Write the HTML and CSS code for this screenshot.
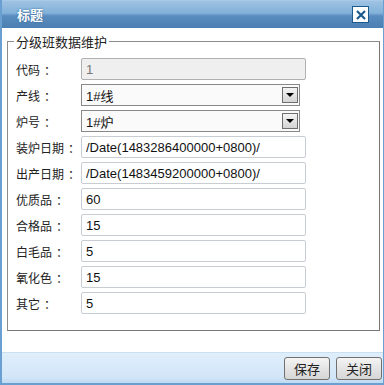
FILE: index.html
```html
<!DOCTYPE html>
<html lang="zh-CN">
<head>
    <meta charset="UTF-8">
    <title>标题</title>
    <link rel="stylesheet" href="styles.css">
</head>
<body>

<div class="dialog">
    <!-- Title Bar -->
    <div class="titlebar">
        <span class="title">标题</span>
        <span class="close-btn">
            <svg width="10" height="10" viewBox="0 0 10 10">
                <path d="M1 1 L9 9 M9 1 L1 9" stroke="#1d5a8c" stroke-width="2.2"/>
            </svg>
        </span>
    </div>

    <!-- Form -->
    <div class="content">
        <fieldset class="group">
            <legend>分级班数据维护</legend>
            <div class="row">
                <label>代码<span class="colon">：</span></label>
                <input type="text" class="field" value="1" disabled>
            </div>
            <div class="row">
                <label>产线<span class="colon">：</span></label>
                <div class="select"><span>1#线</span><span class="arrow"></span></div>
            </div>
            <div class="row">
                <label>炉号<span class="colon">：</span></label>
                <div class="select"><span>1#炉</span><span class="arrow"></span></div>
            </div>
            <div class="row">
                <label>装炉日期<span class="colon">：</span></label>
                <input type="text" class="field" value="/Date(1483286400000+0800)/">
            </div>
            <div class="row">
                <label>出产日期<span class="colon">：</span></label>
                <input type="text" class="field" value="/Date(1483459200000+0800)/">
            </div>
            <div class="row">
                <label>优质品<span class="colon">：</span></label>
                <input type="text" class="field" value="60">
            </div>
            <div class="row">
                <label>合格品<span class="colon">：</span></label>
                <input type="text" class="field" value="15">
            </div>
            <div class="row">
                <label>白毛品<span class="colon">：</span></label>
                <input type="text" class="field" value="5">
            </div>
            <div class="row">
                <label>氧化色<span class="colon">：</span></label>
                <input type="text" class="field" value="15">
            </div>
            <div class="row">
                <label>其它<span class="colon">：</span></label>
                <input type="text" class="field" value="5">
            </div>
        </fieldset>
    </div>

    <!-- Buttons -->
    <div class="footer">
        <button class="btn">保存</button>
        <button class="btn">关闭</button>
    </div>
</div>

</body>
</html>
```

FILE: styles.css
```css
body {
    margin: 0;
    font-family: "Liberation Sans", "Noto Sans CJK SC", sans-serif;
    font-size: 12px;
    color: #222;
    background: #fff;
}

.dialog {
    display: flex;
    flex-direction: column;
    width: 384px;
    height: 385px;
    box-sizing: border-box;
    border-left: 2px solid #6a9fd2;
    border-right: 1px solid #6a9fd2;
    border-bottom: 2px solid #6a9fd2;
    background: #fff;
}

/* Title bar */
.titlebar {
    display: flex;
    align-items: center;
    justify-content: space-between;
    height: 27px;
    padding: 0 14px 0 15px;
    border-top: 1px solid #a9c9e6;
    background: linear-gradient(to bottom, #9ec3e3 0%, #82b1d9 45%, #5a8dbf 55%, #4c7fb1 100%);
    flex-shrink: 0;
}

.title {
    color: #fff;
    font-weight: bold;
    font-size: 13px;
    text-shadow: 0 0 2px #2d5f8f;
}

.close-btn {
    display: flex;
    align-items: center;
    justify-content: center;
    width: 15px;
    height: 15px;
    background: #fff;
    border: 1px solid #1d5a8c;
}

/* Form area */
.content {
    flex: 1;
    padding: 4px 3px 0 5px;
}

.group {
    margin: 0;
    padding: 7px 0 16px 8px;
    border: 1px solid #8c8c8c;
    border-right-color: #777;
    border-bottom-color: #777;
}

.group legend {
    padding: 0 2px;
    margin-left: -2px;
    font-size: 13px;
    color: #222;
}

.row {
    display: flex;
    align-items: center;
    height: 22px;
    margin-bottom: 4px;
}

.row:last-child {
    margin-bottom: 0;
}

.row label {
    width: 65px;
    font-family: "Noto Sans CJK SC", sans-serif;
    font-size: 12px;
    color: #222;
}

.row .colon {
    margin-left: 4px;
}

.field {
    width: 225px;
    height: 22px;
    box-sizing: border-box;
    padding: 0 4px;
    border: 1px solid #c8cdd3;
    border-radius: 2px;
    font-family: "Liberation Sans", "Noto Sans CJK SC", sans-serif;
    font-size: 13px;
    color: #111;
    background: #fff;
}

.field:disabled {
    background: #efefef;
    border-color: #b0b0b0;
    color: #777;
}

.select {
    display: flex;
    align-items: center;
    justify-content: space-between;
    width: 219px;
    height: 22px;
    box-sizing: border-box;
    padding: 0 1px 0 4px;
    border: 1px solid #888;
    background: #fafafa;
    font-size: 13px;
    color: #111;
}

.select .arrow {
    width: 16px;
    height: 16px;
    box-sizing: border-box;
    border: 1px solid #6f6f6f;
    background: linear-gradient(to bottom, #f4f4f4, #d4d4d4);
    position: relative;
}

.select .arrow::after {
    content: "";
    position: absolute;
    left: 3px;
    top: 5px;
    border-left: 4px solid transparent;
    border-right: 4px solid transparent;
    border-top: 4px solid #000;
}

/* Footer */
.footer {
    display: flex;
    justify-content: flex-end;
    align-items: center;
    gap: 6px;
    height: 30px;
    padding: 0 1px 0 0;
    border-top: 1px solid #c9dff2;
    background: linear-gradient(to bottom, #e0eefb, #d2e6f8 80%, #c0daf2);
    flex-shrink: 0;
}

.btn {
    width: 46px;
    height: 23px;
    padding: 0;
    border: 1px solid #707070;
    border-radius: 3px;
    background: linear-gradient(to bottom, #f4f4f4, #e4e4e4 50%, #d6d6d6);
    font-family: "Noto Sans CJK SC", sans-serif;
    font-size: 13px;
    color: #222;
}
```
